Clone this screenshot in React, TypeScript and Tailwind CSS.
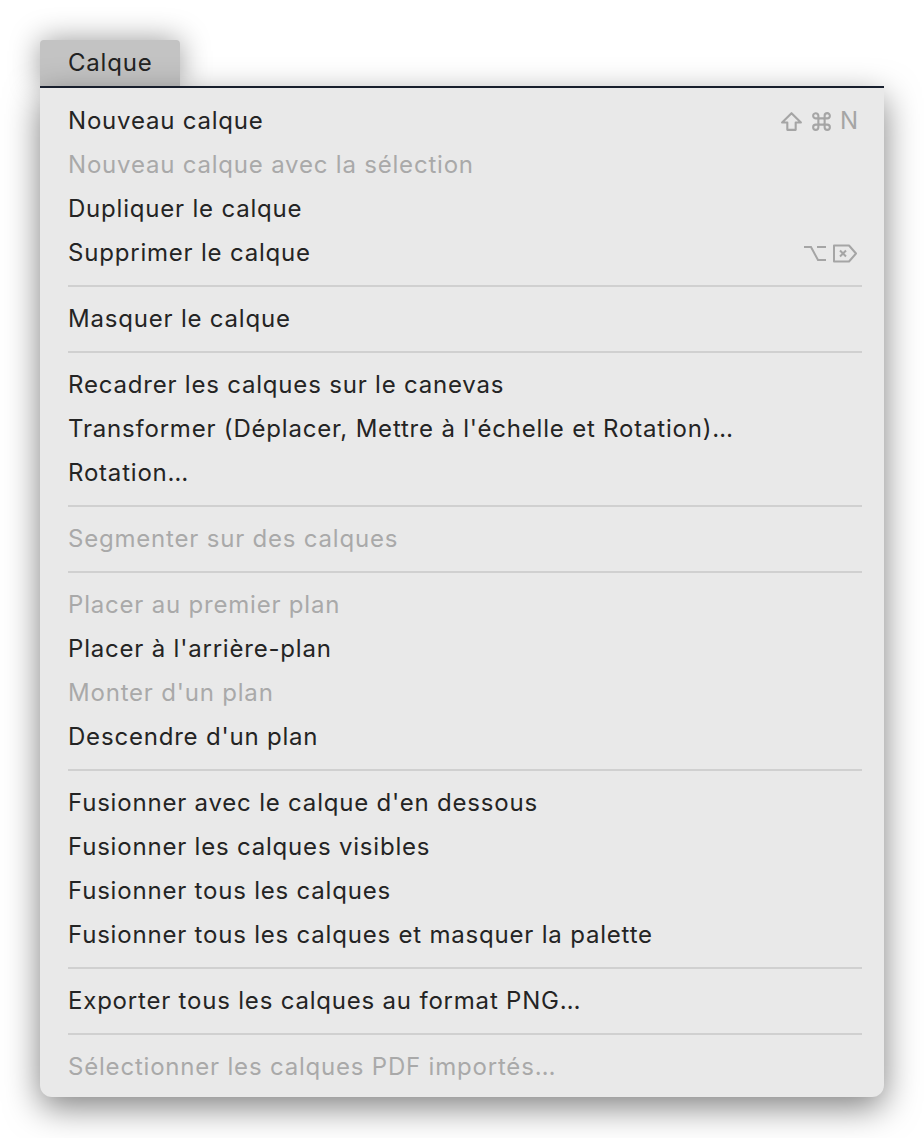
import React from 'react';

type Item =
  | { kind: 'item'; label: string; disabled?: boolean; shortcut?: 'new' | 'delete' }
  | { kind: 'sep' };

const items: Item[] = [
  { kind: 'item', label: 'Nouveau calque', shortcut: 'new' },
  { kind: 'item', label: 'Nouveau calque avec la sélection', disabled: true },
  { kind: 'item', label: 'Dupliquer le calque' },
  { kind: 'item', label: 'Supprimer le calque', shortcut: 'delete' },
  { kind: 'sep' },
  { kind: 'item', label: 'Masquer le calque' },
  { kind: 'sep' },
  { kind: 'item', label: 'Recadrer les calques sur le canevas' },
  { kind: 'item', label: "Transformer (Déplacer, Mettre à l'échelle et Rotation)…" },
  { kind: 'item', label: 'Rotation…' },
  { kind: 'sep' },
  { kind: 'item', label: 'Segmenter sur des calques', disabled: true },
  { kind: 'sep' },
  { kind: 'item', label: 'Placer au premier plan', disabled: true },
  { kind: 'item', label: "Placer à l'arrière-plan" },
  { kind: 'item', label: "Monter d'un plan", disabled: true },
  { kind: 'item', label: "Descendre d'un plan" },
  { kind: 'sep' },
  { kind: 'item', label: "Fusionner avec le calque d'en dessous" },
  { kind: 'item', label: 'Fusionner les calques visibles' },
  { kind: 'item', label: 'Fusionner tous les calques' },
  { kind: 'item', label: 'Fusionner tous les calques et masquer la palette' },
  { kind: 'sep' },
  { kind: 'item', label: 'Exporter tous les calques au format PNG…' },
  { kind: 'sep' },
  { kind: 'item', label: 'Sélectionner les calques PDF importés…', disabled: true },
];

function ShiftIcon() {
  return (
    <svg width="23" height="21" viewBox="0 0 22 20" fill="none" stroke="currentColor" strokeWidth="2" strokeLinejoin="round">
      <path d="M11 2 L2 11 H7 V18 H15 V11 H20 Z" />
    </svg>
  );
}

function CmdIcon() {
  return (
    <svg width="23" height="21" viewBox="0 0 22 20" fill="none" stroke="currentColor" strokeWidth="2">
      <path d="M8 7 V13 M14 7 V13 M8 7 H14 M8 13 H14" />
      <path d="M8 7 H6 A2.5 2.5 0 1 1 8 4.5 Z" />
      <path d="M14 7 V4.5 A2.5 2.5 0 1 1 16.5 7 Z" />
      <path d="M8 13 V15.5 A2.5 2.5 0 1 1 5.5 13 Z" />
      <path d="M14 13 H16.5 A2.5 2.5 0 1 1 14 15.5 Z" />
    </svg>
  );
}

function OptIcon() {
  return (
    <svg width="24" height="20" viewBox="0 0 24 20" fill="none" stroke="currentColor" strokeWidth="2">
      <path d="M1 4 H8 L15 17 H23" />
      <path d="M14 4 H23" />
    </svg>
  );
}

function DelIcon() {
  return (
    <svg width="26" height="21" viewBox="0 0 26 20" fill="none" stroke="currentColor" strokeWidth="2" strokeLinejoin="round">
      <path d="M2 2 H17 L24 10 L17 18 H2 Z" />
      <path d="M8 7 L14 13 M14 7 L8 13" />
    </svg>
  );
}

export default function App() {
  return (
    <div
      className="min-h-[1138px] w-[924px] bg-white pt-10 pl-10"
      style={{ fontFamily: 'Inter, "Noto Sans", sans-serif' }}
    >
      <div className="w-[844px]">
        {/* menu bar title */}
        <div className="flex h-[46px] w-[140px] items-center rounded-t-[4px] bg-[#c3c3c3] pl-[28px] text-[24px] tracking-[0.8px] text-[#222222] shadow-[0_0_30px_rgba(0,0,0,0.4)]">
          Calque
        </div>
        <div className="h-[2px] bg-[#1b2333]" />
        <div className="rounded-b-[12px] bg-[#e9e9e9] pt-[11px] pb-[8px] shadow-[0_10px_34px_rgba(0,0,0,0.5)]">
          {items.map((it, i) =>
            it.kind === 'sep' ? (
              <div key={i} className="flex h-[22px] items-center pl-7 pr-[22px]">
                <div className="h-[2px] w-full bg-[#d0d0d0]" />
              </div>
            ) : (
              <div
                key={i}
                className={`flex h-[44px] items-center justify-between pl-7 pr-[26px] text-[24px] ${
                  it.disabled ? 'text-[#a9a9a9]' : 'text-[#242424]'
                }`}
              >
                <span className="tracking-[0.8px]">{it.label}</span>
                {it.shortcut === 'new' && (
                  <span className="flex items-center gap-[7px] text-[#a5a5a5]">
                    <ShiftIcon />
                    <CmdIcon />
                    <span className="text-[24px] leading-none">N</span>
                  </span>
                )}
                {it.shortcut === 'delete' && (
                  <span className="flex items-center gap-[5px] text-[#a5a5a5]">
                    <OptIcon />
                    <DelIcon />
                  </span>
                )}
              </div>
            )
          )}
        </div>
      </div>
    </div>
  );
}
